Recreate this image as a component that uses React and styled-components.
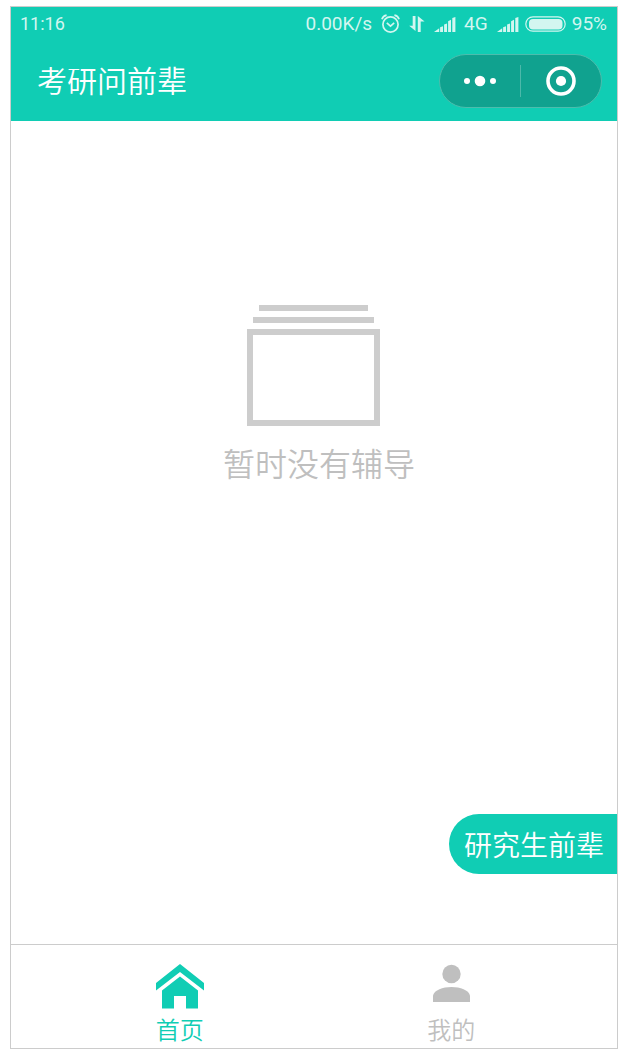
import React from 'react';
import styled, { createGlobalStyle } from 'styled-components';

const teal = '#10cdb4';
const line = '#cccccc';

const GlobalStyle = createGlobalStyle`
  * { box-sizing: border-box; }
  body {
    margin: 0;
    background: #fff;
    font-family: "Noto Sans CJK SC", sans-serif;
    font-weight: 350;
  }
  button { font: inherit; color: inherit; border: 0; background: none; padding: 0; cursor: pointer; }
`;

const Page = styled.div`
  min-height: 100vh;
  padding: 6px 6px 9px 10px;
  display: flex;
`;

const Phone = styled.div`
  flex: 1;
  display: flex;
  flex-direction: column;
  border: 1px solid ${line};
`;

const Header = styled.header`
  background: ${teal};
  color: #fff;
`;

const StatusBar = styled.div`
  display: flex;
  align-items: center;
  justify-content: space-between;
  height: 34px;
  padding: 0 10px 0 9px;
  color: #d3f6f0;
  font: 400 19px/34px Roboto, sans-serif;
`;

const Clock = styled.time`
  font-size: 18px;
`;

const StatusGroup = styled.div`
  display: flex;
  align-items: center;
  gap: ${p => p.$gap}px;
`;

const TitleBar = styled.div`
  display: flex;
  align-items: center;
  justify-content: space-between;
  height: 80px;
  padding: 0 15px 0 26px;
`;

const Title = styled.h1`
  margin: 0;
  padding-bottom: 4px;
  font-size: 30px;
  line-height: 40px;
  font-weight: 350;
`;

const Capsule = styled.div`
  display: flex;
  align-items: center;
  width: 163px;
  height: 54px;
  border: 1px solid #4cbdad;
  border-radius: 27px;
  background: #10a28f;
`;

const CapsuleButton = styled.button`
  flex: 1;
  height: 32px;
  display: flex;
  align-items: center;
  justify-content: center;
  & + & { border-left: 1px solid #4cb9aa; }
`;

const Main = styled.main`
  flex: 1;
  display: flex;
  flex-direction: column;
  align-items: center;
  padding: 184px 0 70px;
`;

const Empty = styled.section`
  display: flex;
  flex-direction: column;
  align-items: flex-start;
  padding-left: 10px;
  gap: 16px;

  svg { margin-left: 24px; }
`;

const EmptyText = styled.p`
  margin: 0;
  color: #bfbfbf;
  font-size: 32px;
  line-height: 40px;
`;

const SeniorButton = styled.button`
  && {
    margin-top: auto;
    align-self: flex-end;
    height: 60px;
    padding: 0 13px 0 15px;
    border-radius: 30px 0 0 30px;
    background: ${teal};
    color: #fff;
    font-size: 28px;
    line-height: 60px;
  }
`;

const TabBar = styled.nav`
  display: flex;
  height: 104px;
  padding: 0 30px 0 33px;
  border-top: 1px solid ${line};
`;

const Tab = styled.a`
  flex: 1;
  display: flex;
  flex-direction: column;
  align-items: center;
  justify-content: space-between;
  padding: 19px 0 7px;
  color: ${p => (p.$active ? teal : '#bfbfbf')};
  font-size: 24px;
  line-height: 24px;
  text-decoration: none;
`;

const AlarmIcon = () => (
  <svg width="19" height="20" viewBox="0 0 19 20" fill="none" stroke="currentColor" strokeWidth="1.7">
    <circle cx="9.5" cy="10.5" r="7.6" />
    <path d="M5.8 8.8l3.7 3.4 3.7-3.4M.9 5.2Q2 2 5.6 1.2M18.1 5.2Q17 2 13.4 1.2" />
  </svg>
);

const DataIcon = () => (
  <svg width="16" height="16" viewBox="0 0 16 16" fill="currentColor">
    <path d="M3.7 0H6.5V15L.2 9.7H3.7zM8.8 0L15.6 5.6H11.7V16H8.8z" />
  </svg>
);

const SignalIcon = () => (
  <svg width="22" height="15" viewBox="0 0 22 15" fill="currentColor">
    <path d="M0 15L5.2 11.2V15zM6.1 10.3L9 9.2V15H6.1zM10.1 7.6L13 6.5V15H10.1zM14.1 4.2L17 2.8V15H14.1zM18.3 1L21.4 0V15H18.3z" />
  </svg>
);

const BatteryIcon = () => (
  <svg width="41" height="16" viewBox="0 0 41 16">
    <rect x=".8" y=".8" width="39.4" height="14.4" rx="7.2" fill="none" stroke="currentColor" strokeWidth="1.2" />
    <rect x="4" y="3" width="33.5" height="10.4" rx="4" fill="currentColor" />
  </svg>
);

const MoreIcon = () => (
  <svg width="32" height="12" viewBox="0 0 32 12" fill="#fff">
    <circle cx="3" cy="6" r="3" />
    <circle cx="16" cy="6" r="5.3" />
    <circle cx="29" cy="6" r="3" />
  </svg>
);

const CloseIcon = () => (
  <svg width="30" height="30" viewBox="0 0 30 30">
    <circle cx="15" cy="15" r="13" fill="none" stroke="#fff" strokeWidth="3.6" />
    <circle cx="15" cy="15" r="5.1" fill="#fff" />
  </svg>
);

const StackIcon = () => (
  <svg width="133" height="121" viewBox="0 0 133 121" fill="#cdcdcd">
    <path d="M12 0H121V6H12zM6 12H127V18H6z" />
    <path fillRule="evenodd" d="M0 24H133V121H0zM6 30V115H127V30z" />
  </svg>
);

const HomeIcon = () => (
  <svg width="48" height="45" viewBox="0 0 48 45" fill="currentColor">
    <path d="M24 0L48 19V26.5L24 8 0 26.5V19z" />
    <path d="M24 12.5L42 26.5V44.5H30V32H18V44.5H6V26.5z" />
  </svg>
);

const PersonIcon = () => (
  <svg width="37" height="38" viewBox="0 0 37 38" fill="currentColor">
    <circle cx="18.5" cy="10" r="9.2" />
    <path d="M0 38V31.5C1.5 26 9.5 23 18.5 23S35.5 26 37 31.5V38z" />
  </svg>
);

export default function App() {
  return (
    <>
      <GlobalStyle />
      <Page>
        <Phone>
          <Header>
            <StatusBar>
              <Clock>11:16</Clock>
              <StatusGroup $gap={9}>
                <span>0.00K/s</span>
                <AlarmIcon />
                <DataIcon />
                <StatusGroup $gap={8}>
                  <SignalIcon />
                  <span>4G</span>
                </StatusGroup>
                <StatusGroup $gap={6}>
                  <SignalIcon />
                  <BatteryIcon />
                  <span>95%</span>
                </StatusGroup>
              </StatusGroup>
            </StatusBar>
            <TitleBar>
              <Title>考研问前辈</Title>
              <Capsule>
                <CapsuleButton aria-label="更多"><MoreIcon /></CapsuleButton>
                <CapsuleButton aria-label="关闭"><CloseIcon /></CapsuleButton>
              </Capsule>
            </TitleBar>
          </Header>
          <Main>
            <Empty>
              <StackIcon />
              <EmptyText>暂时没有辅导</EmptyText>
            </Empty>
            <SeniorButton>研究生前辈</SeniorButton>
          </Main>
          <TabBar>
            <Tab href="#home" $active><HomeIcon />首页</Tab>
            <Tab href="#mine"><PersonIcon />我的</Tab>
          </TabBar>
        </Phone>
      </Page>
    </>
  );
}
